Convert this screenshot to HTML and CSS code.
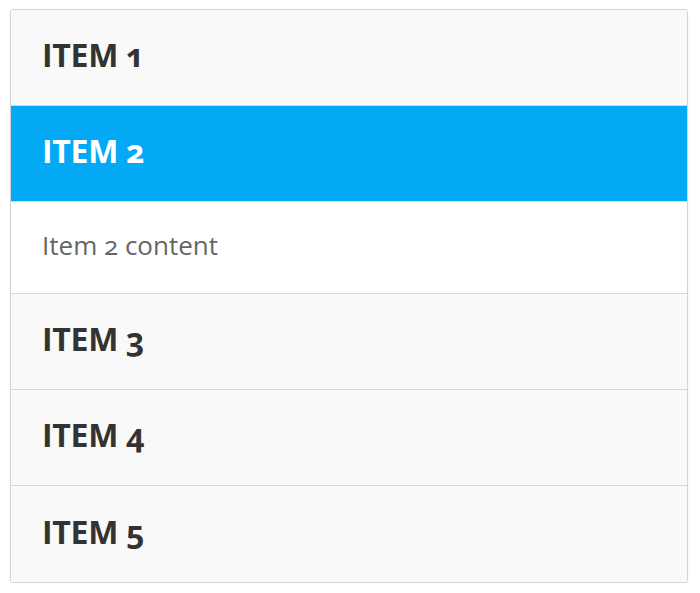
FILE: index.html
```html
<!DOCTYPE html>
<html>
<head>
<meta charset="utf-8">
<link rel="stylesheet" href="styles.css">
</head>
<body>
<div class="accordion">
  <div class="item"><div class="header">ITEM 1</div></div>
  <div class="item open">
    <div class="header">ITEM 2</div>
    <div class="content">Item 2 content</div>
  </div>
  <div class="item"><div class="header">ITEM 3</div></div>
  <div class="item"><div class="header">ITEM 4</div></div>
  <div class="item last"><div class="header">ITEM 5</div></div>
</div>
</body>
</html>
```
FILE: styles.css
```css
html, body {
  margin: 0;
  padding: 0;
  background: #ffffff;
}
body {
  padding: 9px 12px 0 10px;
  font-family: "Open Sans", "Noto Sans", sans-serif;
}
.accordion {
  border: 1px solid #d4d4d4;
  border-radius: 3px;
  box-shadow: 0 1px 2px rgba(0,0,0,0.08);
  overflow: hidden;
  width: 676px;
}
.item + .item {
  border-top: 1px solid #d8d8d8;
}
.header {
  box-sizing: border-box;
  height: 95px;
  display: flex;
  align-items: center;
  padding: 0 0 6px 31px;
  background: #f9f9f9;
  color: #333333;
  font-weight: 700;
  font-size: 32px;
  font-variant-numeric: oldstyle-nums;
  font-feature-settings: "onum" 1;
  letter-spacing: -0.3px;
}
.last .header {
  height: 96px;
}
.open .header {
  background: #03a9f4;
  color: #ffffff;
}
.content {
  box-sizing: border-box;
  height: 92px;
  display: flex;
  align-items: center;
  padding: 0 0 6px 31px;
  background: #ffffff;
  border-top: 1px solid #d8d8d8;
  color: #666666;
  font-size: 26px;
  font-variant-numeric: oldstyle-nums;
  font-feature-settings: "onum" 1;
}
```
